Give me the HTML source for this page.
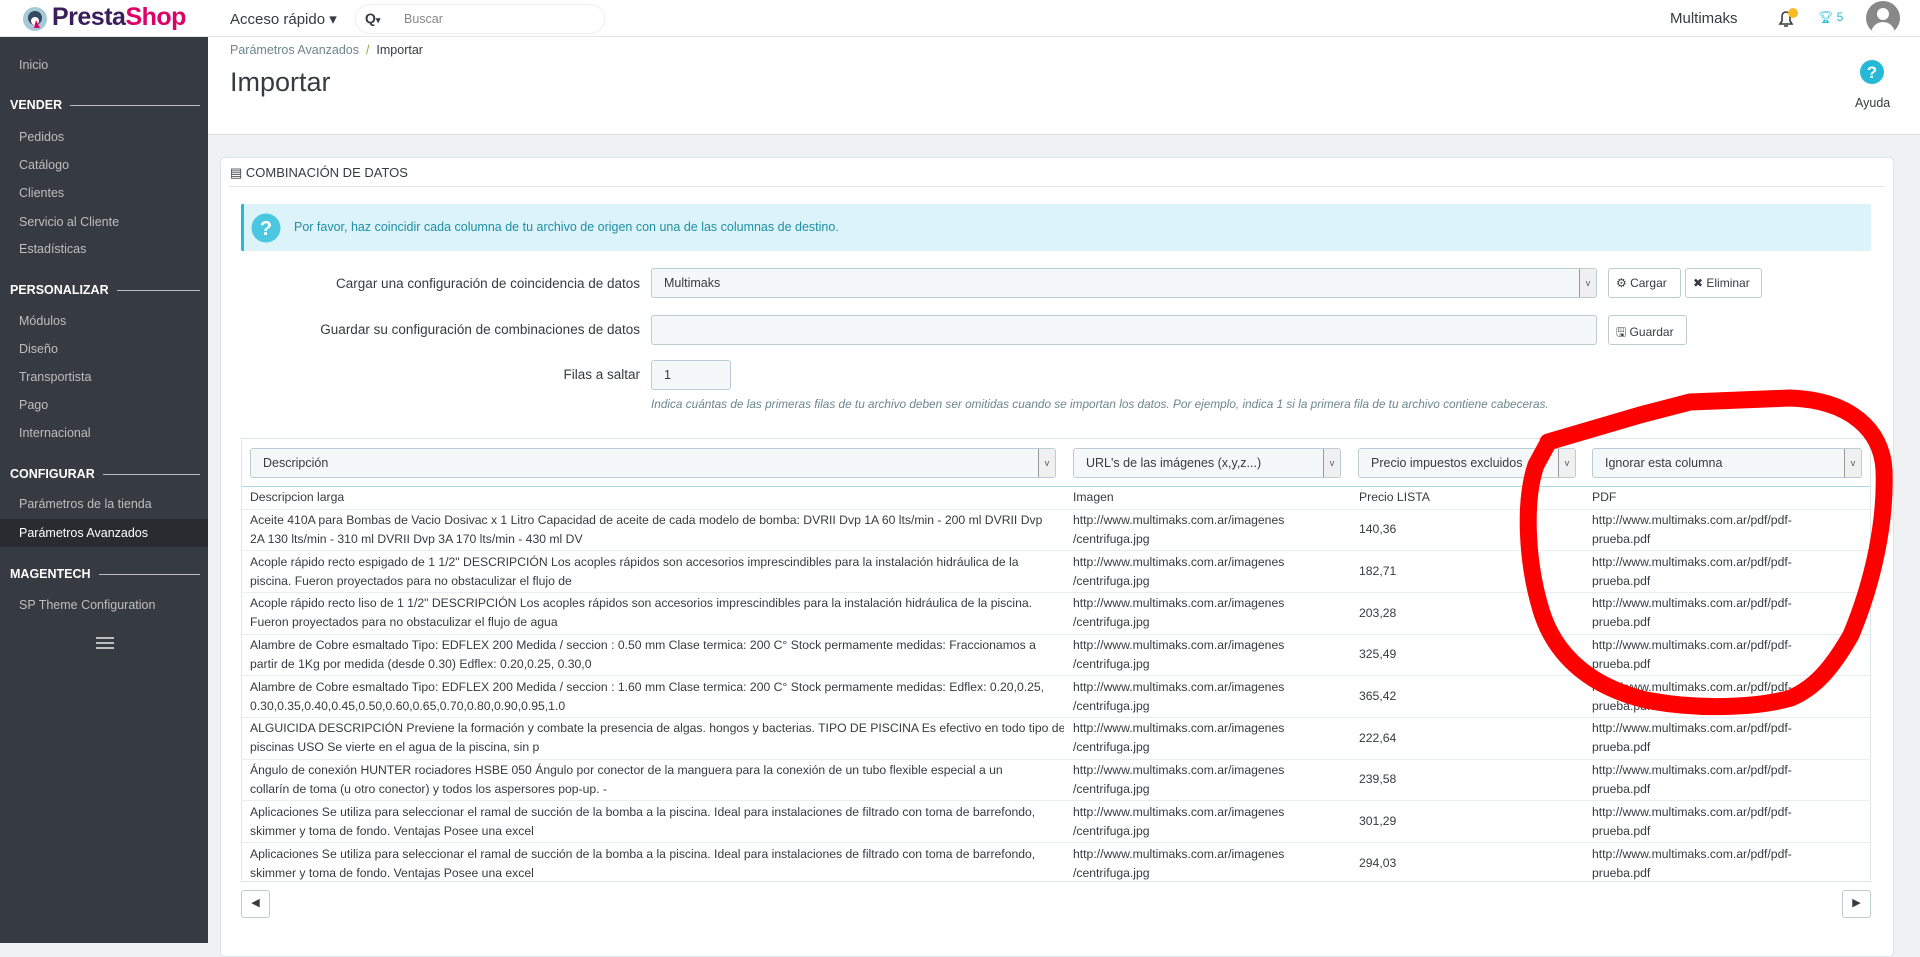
<!DOCTYPE html>
<html><head><meta charset="utf-8"><style>
*{box-sizing:border-box;margin:0;padding:0}
body{width:1920px;height:943px;overflow:hidden;background:#eff1f2;font-family:"Liberation Sans",sans-serif;color:#363a41;font-size:13px;position:relative}
.abs{position:absolute}
#hdr{left:0;top:0;width:1920px;height:37px;background:#fff;border-bottom:1px solid #e5e5e5}
#side{left:0;top:37px;width:208px;height:906px;background:#363a41}
#side .it{position:absolute;left:19px;color:#bebebe;font-size:12.5px}
#side .sec{position:absolute;left:10px;color:#fff;font-weight:bold;font-size:12.5px;width:190px;display:flex;align-items:center}
#side .sec:after{content:"";flex:1;margin-left:8px;height:1px;background:#bebebe}
#tool{left:208px;top:37px;width:1712px;height:98px;background:#fff;border-bottom:1px solid #ddd}
.panel{left:220px;top:157px;width:1674px;height:800px;background:#fff;border:1px solid #dbe6e9;border-radius:5px}
.sel{position:absolute;height:30px;background:#f5f8f9;border:1px solid #bbcdd2;border-radius:3px;font-size:12.5px;padding:7px 12px;color:#363a41}
.sel .ar{position:absolute;right:0;top:0;width:17px;height:28px;border-left:1px solid #999;background:#f0f0f0;border-radius:0 3px 3px 0;font-size:9px;text-align:center;line-height:28px;color:#555}
.btn{position:absolute;height:30px;background:#fff;border:1px solid #bbcdd2;border-radius:3px;font-size:12px;padding:7px 7px;color:#363a41}
.lbl{position:absolute;right:1280px;font-size:13.5px;color:#363a41;text-align:right;white-space:nowrap}
table{border-collapse:collapse;table-layout:fixed;font-size:12.2px;color:#363a41;position:absolute;left:241px;top:486px;width:1630px}
td{vertical-align:middle;padding:0 0 0 9px;border-top:1px solid #e8eef0;height:41.7px;line-height:19px;white-space:nowrap;overflow:hidden}
tr.h td{height:23px;border-top:none}
</style></head><body>
<div id="hdr" class="abs">
 <svg class="abs" style="left:22px;top:6px" width="26" height="26"><circle cx="13" cy="13" r="12" fill="#a6c9d7"/><circle cx="13" cy="12" r="7" fill="#34495e"/><circle cx="13" cy="15" r="4" fill="#fff"/><path d="M14 14 l4 8 l-6 0z" fill="#df0067"/></svg>
 <div class="abs" style="left:52px;top:3px;font-size:25px;font-weight:bold;letter-spacing:-0.5px"><span style="color:#3a1d5c">Presta</span><span style="color:#df0067">Shop</span></div>
 <div class="abs" style="left:230px;top:10px;font-size:15px">Acceso rápido ▾</div>
 <div class="abs" style="left:355px;top:4px;width:250px;height:30px;border:1px solid #eee;border-radius:16px"></div>
 <div class="abs" style="left:365px;top:10px;font-size:14px;font-weight:bold">Q<span style="font-size:9px">▾</span></div>
 <div class="abs" style="left:404px;top:12px;font-size:12.5px;color:#888">Buscar</div>
 <div class="abs" style="left:1670px;top:10px;font-size:15px">Multimaks</div>
 <svg class="abs" style="left:1776px;top:8px" width="22" height="22"><path d="M4 16 h12 l-2 -3 v-5 a4 4 0 0 0 -8 0 v5z M8 18 h4" stroke="#363a41" stroke-width="1.6" fill="none"/><circle cx="17" cy="5" r="5" fill="#fbbb22"/></svg>
 <div class="abs" style="left:1818px;top:10px;color:#25b9d7;font-size:12px">🏆︎ 5</div>
 <div class="abs" style="left:1866px;top:1px;width:34px;height:34px;border-radius:50%;background:#888;overflow:hidden"><div style="margin:7px auto 0;width:12px;height:12px;border-radius:50%;background:#fff"></div><div style="margin:2px auto;width:24px;height:16px;border-radius:12px 12px 0 0;background:#fff"></div></div>
</div>
<div id="side" class="abs">
 <div class="it" style="top:21px">Inicio</div>
 <div class="sec" style="top:61px">VENDER</div>
 <div class="it" style="top:93px">Pedidos</div>
 <div class="it" style="top:121px">Catálogo</div>
 <div class="it" style="top:149px">Clientes</div>
 <div class="it" style="top:178px">Servicio al Cliente</div>
 <div class="it" style="top:205px">Estadísticas</div>
 <div class="sec" style="top:246px">PERSONALIZAR</div>
 <div class="it" style="top:277px">Módulos</div>
 <div class="it" style="top:305px">Diseño</div>
 <div class="it" style="top:333px">Transportista</div>
 <div class="it" style="top:361px">Pago</div>
 <div class="it" style="top:389px">Internacional</div>
 <div class="sec" style="top:430px">CONFIGURAR</div>
 <div class="it" style="top:460px">Parámetros de la tienda</div>
 <div class="abs" style="left:0;top:482px;width:208px;height:28px;background:#282b30"></div>
 <div class="it" style="top:489px;color:#fff">Parámetros Avanzados</div>
 <div class="sec" style="top:530px">MAGENTECH</div>
 <div class="it" style="top:561px">SP Theme Configuration</div>
 <div class="abs" style="left:96px;top:600px;width:18px;height:2px;background:#bebebe;box-shadow:0 5px 0 #bebebe,0 10px 0 #bebebe"></div>
</div>
<div id="tool" class="abs">
 <div class="abs" style="left:22px;top:6px;font-size:12.5px;color:#6c868e">Parámetros Avanzados &nbsp;<span style="color:#7cb342">/</span>&nbsp; <span style="color:#363a41">Importar</span></div>
 <div class="abs" style="left:22px;top:30px;font-size:27px">Importar</div>
 <svg class="abs" style="left:1651px;top:22px" width="26" height="26"><circle cx="13" cy="13" r="12" fill="#25b9d7"/><text x="13" y="19" font-size="17" font-weight="bold" fill="#fff" text-anchor="middle" font-family="Liberation Sans">?</text></svg>
 <div class="abs" style="left:1647px;top:59px;font-size:12.5px">Ayuda</div>
</div>
<div class="abs panel">
 <div class="abs" style="left:9px;top:7px;font-size:13px;color:#363a41">▤ COMBINACIÓN DE DATOS</div>
 <div class="abs" style="left:8px;top:28px;width:1656px;height:1px;background:#e6e6e6"></div>
</div>
<div class="abs" style="left:241px;top:204px;width:1630px;height:47px;background:#dcf4f9;border-left:3px solid #25b9d7;border-radius:2px"></div>
<svg class="abs" style="left:251px;top:213px" width="30" height="30"><circle cx="15" cy="15" r="14.5" fill="#4bc7e0"/><text x="15" y="22" font-size="20" font-weight="bold" fill="#fff" text-anchor="middle" font-family="Liberation Sans">?</text></svg>
<div class="abs" style="left:294px;top:220px;font-size:12.5px;color:#1f8ea4">Por favor, haz coincidir cada columna de tu archivo de origen con una de las columnas de destino.</div>

<div class="lbl" style="top:276px">Cargar una configuración de coincidencia de datos</div>
<div class="sel" style="left:651px;top:268px;width:946px">Multimaks<div class="ar">v</div></div>
<div class="btn" style="left:1608px;top:268px;width:73px">⚙ Cargar</div>
<div class="btn" style="left:1685px;top:268px;width:77px">✖ Eliminar</div>
<div class="lbl" style="top:322px">Guardar su configuración de combinaciones de datos</div>
<div class="sel" style="left:651px;top:315px;width:946px;background:#f5f8f9"></div>
<div class="btn" style="left:1608px;top:315px;width:79px">🖫 Guardar</div>
<div class="lbl" style="top:367px">Filas a saltar</div>
<div class="sel" style="left:651px;top:360px;width:80px">1</div>
<div class="abs" style="left:651px;top:397px;font-size:11.8px;font-style:italic;color:#6c868e">Indica cuántas de las primeras filas de tu archivo deben ser omitidas cuando se importan los datos. Por ejemplo, indica 1 si la primera fila de tu archivo contiene cabeceras.</div>

<div class="abs" style="left:241px;top:438px;width:1630px;height:444px;border:1px solid #dbe6e9;background:#fff"></div>
<div class="sel" style="left:250px;top:448px;width:806px">Descripción<div class="ar">v</div></div>
<div class="sel" style="left:1073px;top:448px;width:268px">URL's de las imágenes (x,y,z...)<div class="ar">v</div></div>
<div class="sel" style="left:1358px;top:448px;width:218px">Precio impuestos excluidos<div class="ar">v</div></div>
<div class="sel" style="left:1592px;top:448px;width:270px">Ignorar esta columna<div class="ar">v</div></div>
<div class="abs" style="left:242px;top:486px;width:1628px;height:1px;background:#a8d9e6"></div>
<table>
<colgroup><col style="width:823px"><col style="width:286px"><col style="width:233px"><col></colgroup>
<tr class="h"><td>Descripcion larga</td><td>Imagen</td><td>Precio LISTA</td><td>PDF</td></tr>
<tr><td>Aceite 410A para Bombas de Vacio Dosivac x 1 Litro Capacidad de aceite de cada modelo de bomba: DVRII Dvp 1A 60 lts/min - 200 ml DVRII Dvp<br>2A 130 lts/min - 310 ml DVRII Dvp 3A 170 lts/min - 430 ml DV</td><td>http://www.multimaks.com.ar/imagenes<br>/centrifuga.jpg</td><td>140,36</td><td>http://www.multimaks.com.ar/pdf/pdf-<br>prueba.pdf</td></tr>
<tr><td>Acople rápido recto espigado de 1 1/2" DESCRIPCIÓN Los acoples rápidos son accesorios imprescindibles para la instalación hidráulica de la<br>piscina. Fueron proyectados para no obstaculizar el flujo de</td><td>http://www.multimaks.com.ar/imagenes<br>/centrifuga.jpg</td><td>182,71</td><td>http://www.multimaks.com.ar/pdf/pdf-<br>prueba.pdf</td></tr>
<tr><td>Acople rápido recto liso de 1 1/2" DESCRIPCIÓN Los acoples rápidos son accesorios imprescindibles para la instalación hidráulica de la piscina.<br>Fueron proyectados para no obstaculizar el flujo de agua</td><td>http://www.multimaks.com.ar/imagenes<br>/centrifuga.jpg</td><td>203,28</td><td>http://www.multimaks.com.ar/pdf/pdf-<br>prueba.pdf</td></tr>
<tr><td>Alambre de Cobre esmaltado Tipo: EDFLEX 200 Medida / seccion : 0.50 mm Clase termica: 200 C° Stock permamente medidas: Fraccionamos a<br>partir de 1Kg por medida (desde 0.30) Edflex: 0.20,0.25, 0.30,0</td><td>http://www.multimaks.com.ar/imagenes<br>/centrifuga.jpg</td><td>325,49</td><td>http://www.multimaks.com.ar/pdf/pdf-<br>prueba.pdf</td></tr>
<tr><td>Alambre de Cobre esmaltado Tipo: EDFLEX 200 Medida / seccion : 1.60 mm Clase termica: 200 C° Stock permamente medidas: Edflex: 0.20,0.25,<br>0.30,0.35,0.40,0.45,0.50,0.60,0.65,0.70,0.80,0.90,0.95,1.0</td><td>http://www.multimaks.com.ar/imagenes<br>/centrifuga.jpg</td><td>365,42</td><td>http://www.multimaks.com.ar/pdf/pdf-<br>prueba.pdf</td></tr>
<tr><td>ALGUICIDA DESCRIPCIÓN Previene la formación y combate la presencia de algas. hongos y bacterias. TIPO DE PISCINA Es efectivo en todo tipo de<br>piscinas USO Se vierte en el agua de la piscina, sin p</td><td>http://www.multimaks.com.ar/imagenes<br>/centrifuga.jpg</td><td>222,64</td><td>http://www.multimaks.com.ar/pdf/pdf-<br>prueba.pdf</td></tr>
<tr><td>Ángulo de conexión HUNTER rociadores HSBE 050 Ángulo por conector de la manguera para la conexión de un tubo flexible especial a un<br>collarín de toma (u otro conector) y todos los aspersores pop-up. -</td><td>http://www.multimaks.com.ar/imagenes<br>/centrifuga.jpg</td><td>239,58</td><td>http://www.multimaks.com.ar/pdf/pdf-<br>prueba.pdf</td></tr>
<tr><td>Aplicaciones Se utiliza para seleccionar el ramal de succión de la bomba a la piscina. Ideal para instalaciones de filtrado con toma de barrefondo,<br>skimmer y toma de fondo. Ventajas Posee una excel</td><td>http://www.multimaks.com.ar/imagenes<br>/centrifuga.jpg</td><td>301,29</td><td>http://www.multimaks.com.ar/pdf/pdf-<br>prueba.pdf</td></tr>
<tr><td>Aplicaciones Se utiliza para seleccionar el ramal de succión de la bomba a la piscina. Ideal para instalaciones de filtrado con toma de barrefondo,<br>skimmer y toma de fondo. Ventajas Posee una excel</td><td>http://www.multimaks.com.ar/imagenes<br>/centrifuga.jpg</td><td>294,03</td><td>http://www.multimaks.com.ar/pdf/pdf-<br>prueba.pdf</td></tr>
</table>
<div class="btn" style="left:241px;top:890px;width:29px;height:28px;padding:5px 0;text-align:center;font-size:11px">◀</div>
<div class="btn" style="left:1842px;top:890px;width:29px;height:28px;padding:5px 0;text-align:center;font-size:11px">▶</div>
<svg class="abs" style="left:0;top:0" width="1920" height="943"><path d="M1548 442 L1640 415 L1690 402 L1790 398 C1850 400 1882 430 1884 470 C1886 520 1874 580 1851 635 C1831 670 1814 688 1791 698 C1756 708 1696 710 1646 700 C1596 688 1556 660 1541 610 C1526 560 1524 500 1536 465 L1548 443" stroke="#ff0000" stroke-width="17" fill="none" stroke-linecap="round" stroke-linejoin="round"/></svg>
</body></html>
